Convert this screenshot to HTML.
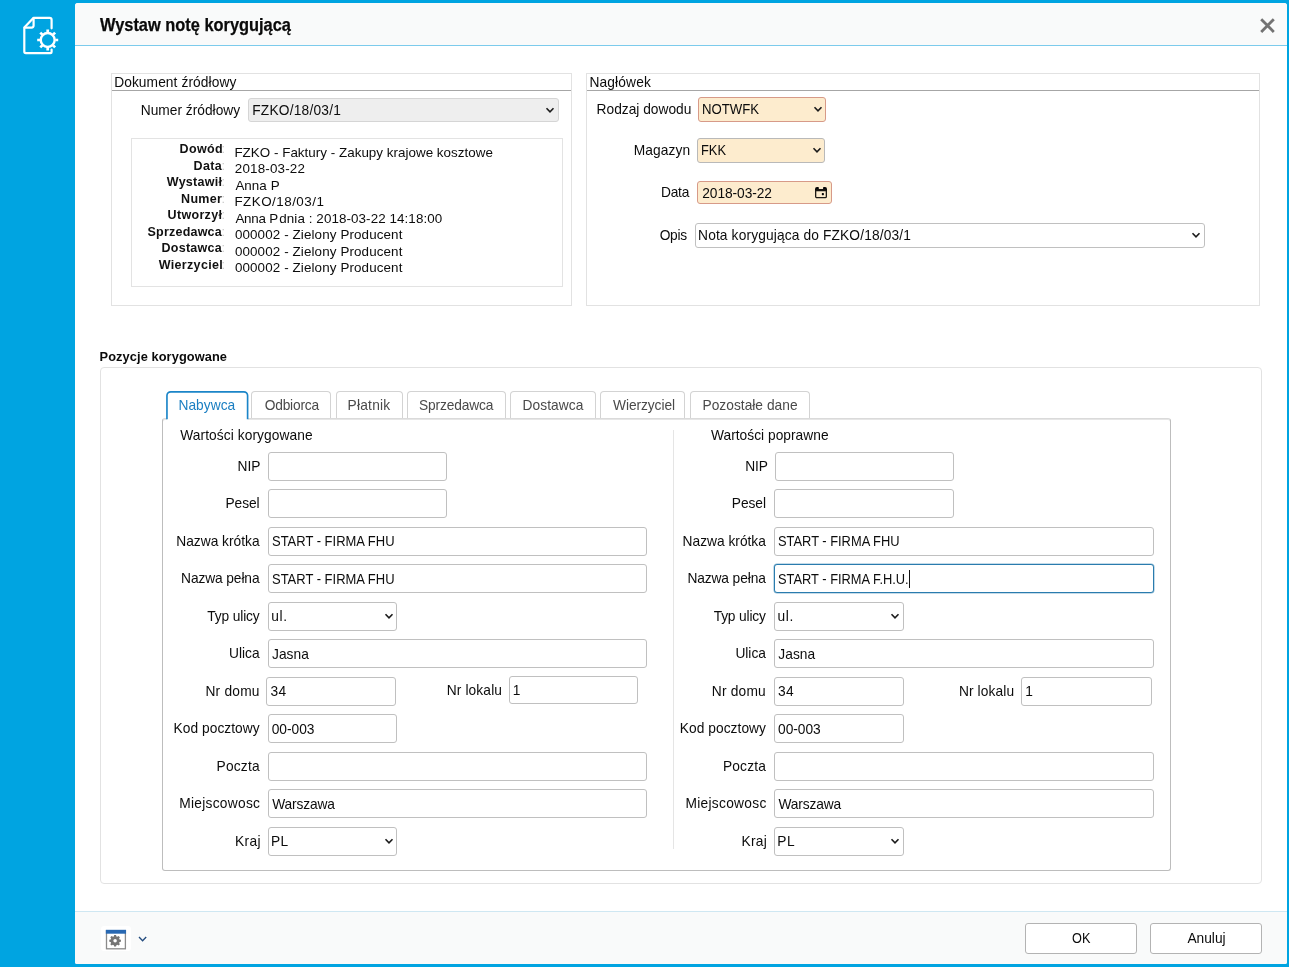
<!DOCTYPE html>
<html>
<head>
<meta charset="utf-8">
<title>Wystaw notę korygującą</title>
<style>
*{box-sizing:border-box;margin:0;padding:0}
html,body{width:1289px;height:967px;overflow:hidden}
body{background:#00a4e1;font-family:"Liberation Sans",sans-serif;font-size:14px;color:#1a1a1a;position:relative}
.abs{position:absolute}
.dlg{position:absolute;left:75px;top:3px;width:1212px;height:961px;background:#fff;border-radius:3px 3px 2px 2px;overflow:hidden}
.tbar{position:absolute;left:0;top:0;width:1212px;height:43px;background:#f9fafa;border-bottom:1px solid #7ccbec}
.fbar{position:absolute;left:0;top:908px;width:1212px;height:53px;background:#f9fafa;border-top:1px solid #cfe7f2}
.btn{position:absolute;border:1px solid #b3b3b3;border-radius:3px;background:#fff;z-index:4}
.fs{position:absolute;border:1px solid #e2e2e2}
.fs .lgl{position:absolute;left:0;right:0;top:16px;height:1px;background:#a6a6a6}
.ibox{position:absolute;border:1px solid #e3e3e3;background:#fff}
.pbox{position:absolute;border:1px solid #e2e2e2;border-radius:4px;background:#fff}
.tpan{position:absolute;border:1px solid #bdbdbd;border-top-color:#dadada;box-shadow:inset 0 1px 0 #e6e6e6;border-radius:3px;background:#fff;z-index:2}
.vdiv{position:absolute;background:#e5e5e5;z-index:3}
.t{position:absolute;white-space:nowrap;line-height:16px;color:#0c0c0c;z-index:5}
.in{position:absolute;border:1px solid #c0c0c0;border-radius:3px;background:#fff;z-index:4}
.in.dis{background:#eeeeee;border-color:#d5d5d5}
.in.or{background:#fdecce;border-color:#d79a88}
.in.or2{background:#fdecce;border-color:#b9b9b9}
.in.foc{border:1px solid #2a7cae;box-shadow:0 0 0 .5px rgba(42,124,174,.55)}
.chv{position:absolute;right:2.3px;top:50%;margin-top:-3px}
.ttl{-webkit-text-stroke:.25px #0a0a0a}
.caret{position:absolute;background:#111;z-index:6}
.tab{position:absolute;border:1px solid #d3d3d3;border-bottom:none;border-radius:4px 4px 0 0;background:#fff;z-index:1}
.tabw{position:absolute;background:#fff;z-index:3}
</style>
</head>
<body>
<!-- sidebar icon -->
<svg class="abs" style="left:20px;top:13px" width="42" height="46" viewBox="0 0 42 46" fill="none" stroke="#fff" stroke-width="2.2" stroke-linejoin="round" stroke-linecap="round">
<path d="M31.6 15.3V6.8a2 2 0 0 0-2-2H13.6L4.3 14.6v24a1.5 1.5 0 0 0 1.5 1.5h24.6a1.2 1.2 0 0 0 1.2-1.2v-2.4"/>
<path d="M13.6 5.2v7.4a2 2 0 0 1-2 2H4.8"/>
<circle cx="27.7" cy="27.0" r="6.95" stroke-width="2.4"/>
<path stroke-width="2.7" stroke-linecap="butt" d="M27.70 19.40L27.70 16.50M33.07 21.63L35.12 19.58M35.30 27.00L38.20 27.00M33.07 32.37L35.12 34.42M27.70 34.60L27.70 37.50M22.33 32.37L20.28 34.42M20.10 27.00L17.20 27.00M22.33 21.63L20.28 19.58"/>
</svg>

<div class="dlg">
  <div class="tbar">
    <svg class="abs" style="left:1182px;top:12px" width="20" height="20" viewBox="0 0 20 20" stroke="#737373" stroke-width="2.8"><path d="M4.2 4.3L16.8 16.9M16.8 4.3L4.2 16.9"/></svg>
  </div>
  <div class="fbar">
    <div class="abs" style="left:26px;top:14.4px;width:30px;height:24.7px;background:#fff;border-radius:3px"></div>
    <svg class="abs" style="left:25px;top:14px" width="50" height="27" viewBox="0 -0.4 50 27">
      <rect x="6.5" y="4.3" width="18.9" height="18.1" fill="#fff" stroke="#8b8b8b" stroke-width="1.3"/>
      <rect x="5.85" y="3.4" width="20.2" height="3.9" fill="#2868b2"/>
      <path d="M13.82 9.98 L14.13 8.58 L16.07 8.58 L16.38 9.98 L17.32 10.37 L18.53 9.60 L19.90 10.97 L19.13 12.18 L19.52 13.12 L20.92 13.43 L20.92 15.37 L19.52 15.68 L19.13 16.62 L19.90 17.83 L18.53 19.20 L17.32 18.43 L16.38 18.82 L16.07 20.22 L14.13 20.22 L13.82 18.82 L12.88 18.43 L11.67 19.20 L10.30 17.83 L11.07 16.62 L10.68 15.68 L9.28 15.37 L9.28 13.43 L10.68 13.12 L11.07 12.18 L10.30 10.97 L11.67 9.60 L12.88 10.37Z" fill="#757575"/>
      <circle cx="15.1" cy="14.4" r="1.75" fill="#fff"/>
      <path d="M39 10.6L42.6 14.3 46.2 10.6" fill="none" stroke="#234b7e" stroke-width="1.35"/>
    </svg>
  </div>
</div>

<!-- CONTENT (absolute page coordinates) -->
<div id="content" class="abs" style="left:0;top:0;width:1289px;height:967px;will-change:transform">
<!--GEN-START-->
<div class="fs" style="left:111.00px;top:73.00px;width:461.00px;height:233.00px;"><div class="lgl"></div></div>
<div class="fs" style="left:586.00px;top:73.00px;width:674.00px;height:233.00px;"><div class="lgl"></div></div>
<div class="t " style="top:75px;line-height:15px;font-size:13.75px;letter-spacing:0.086px;left:114.17px;">Dokument źródłowy</div>
<div class="t " style="top:75px;line-height:15px;font-size:13.75px;letter-spacing:0.161px;left:589.38px;">Nagłówek</div>
<div class="t " style="top:103px;line-height:15px;font-size:13.75px;left:140.78px;">Numer źródłowy</div>
<div class="in sel dis" style="left:248.00px;top:98.00px;width:310.50px;height:23.70px;"><svg class="chv" width="10" height="7" viewBox="0 0 10 7"><path d="M1.5 1.3 L5 4.9 L8.5 1.3" fill="none" stroke="#1c1c1c" stroke-width="1.6"/></svg></div>
<div class="t " style="top:103px;line-height:15px;font-size:13.75px;letter-spacing:0.216px;left:252.18px;">FZKO/18/03/1</div>
<div class="ibox" style="left:131.00px;top:138.00px;width:432.00px;height:149.00px;"></div>
<div class="t " style="top:142px;line-height:14px;font-size:12.5px;letter-spacing:0.344px;font-weight:bold;color:#111;left:179.55px;">Dowód</div>
<div class="t " style="top:145px;line-height:15px;font-size:13.4px;letter-spacing:0.026px;left:234.40px;">FZKO - Faktury - Zakupy krajowe kosztowe</div>
<div class="t " style="top:142px;line-height:14px;font-size:12.5px;color:#c8c8c8;left:221.48px;">:</div>
<div class="t " style="top:159px;line-height:14px;font-size:12.5px;letter-spacing:0.333px;font-weight:bold;color:#111;left:193.55px;">Data</div>
<div class="t " style="top:161px;line-height:15px;font-size:13.4px;letter-spacing:0.181px;left:234.78px;">2018-03-22</div>
<div class="t " style="top:159px;line-height:14px;font-size:12.5px;color:#c8c8c8;left:221.48px;">:</div>
<div class="t " style="top:175px;line-height:14px;font-size:12.5px;letter-spacing:0.268px;font-weight:bold;color:#111;left:166.80px;">Wystawił</div>
<div class="t " style="top:178px;line-height:15px;font-size:13.4px;letter-spacing:0.050px;left:235.40px;">Anna P</div>
<div class="t " style="top:175px;line-height:14px;font-size:12.5px;color:#c8c8c8;left:221.48px;">:</div>
<div class="t " style="top:192px;line-height:14px;font-size:12.5px;letter-spacing:0.312px;font-weight:bold;color:#111;left:181.05px;">Numer</div>
<div class="t " style="top:194px;line-height:15px;font-size:13.4px;letter-spacing:0.489px;left:234.40px;">FZKO/18/03/1</div>
<div class="t " style="top:192px;line-height:14px;font-size:12.5px;color:#c8c8c8;left:221.48px;">:</div>
<div class="t " style="top:208px;line-height:14px;font-size:12.5px;letter-spacing:0.321px;font-weight:bold;color:#111;left:167.55px;">Utworzył</div>
<div class="t " style="top:211px;line-height:15px;font-size:13.4px;letter-spacing:-0.210px;left:235.40px;">Anna P</div>
<div class="t " style="top:211px;line-height:15px;font-size:13.4px;letter-spacing:0.084px;left:279.30px;">dnia : 2018-03-22 14:18:00</div>
<div class="t " style="top:208px;line-height:14px;font-size:12.5px;color:#c8c8c8;left:221.48px;">:</div>
<div class="t " style="top:225px;line-height:14px;font-size:12.5px;letter-spacing:0.208px;font-weight:bold;color:#111;left:147.55px;">Sprzedawca</div>
<div class="t " style="top:227px;line-height:15px;font-size:13.4px;letter-spacing:0.120px;left:234.90px;">000002 - Zielony Producent</div>
<div class="t " style="top:225px;line-height:14px;font-size:12.5px;color:#c8c8c8;left:221.48px;">:</div>
<div class="t " style="top:241px;line-height:14px;font-size:12.5px;letter-spacing:0.250px;font-weight:bold;color:#111;left:161.55px;">Dostawca</div>
<div class="t " style="top:244px;line-height:15px;font-size:13.4px;letter-spacing:0.120px;left:234.90px;">000002 - Zielony Producent</div>
<div class="t " style="top:241px;line-height:14px;font-size:12.5px;color:#c8c8c8;left:221.48px;">:</div>
<div class="t " style="top:258px;line-height:14px;font-size:12.5px;letter-spacing:0.319px;font-weight:bold;color:#111;left:158.80px;">Wierzyciel</div>
<div class="t " style="top:260px;line-height:15px;font-size:13.4px;letter-spacing:0.120px;left:234.90px;">000002 - Zielony Producent</div>
<div class="t " style="top:258px;line-height:14px;font-size:12.5px;color:#c8c8c8;left:221.48px;">:</div>
<div class="t " style="top:102px;line-height:15px;font-size:13.75px;left:596.58px;">Rodzaj dowodu</div>
<div class="in sel or" style="left:698.00px;top:97.40px;width:128.00px;height:24.20px;"><svg class="chv" width="10" height="7" viewBox="0 0 10 7"><path d="M1.5 1.3 L5 4.9 L8.5 1.3" fill="none" stroke="#1c1c1c" stroke-width="1.6"/></svg></div>
<div class="t " style="top:102px;line-height:15px;font-size:13.75px;transform:scaleX(0.9593);transform-origin:0 50%;left:701.72px;">NOTWFK</div>
<div class="t " style="top:143px;line-height:15px;font-size:13.75px;letter-spacing:0.104px;left:633.67px;">Magazyn</div>
<div class="in sel or2" style="left:697.00px;top:138.30px;width:128.00px;height:24.40px;"><svg class="chv" width="10" height="7" viewBox="0 0 10 7"><path d="M1.5 1.3 L5 4.9 L8.5 1.3" fill="none" stroke="#1c1c1c" stroke-width="1.6"/></svg></div>
<div class="t " style="top:143px;line-height:15px;font-size:13.75px;transform:scaleX(0.9366);transform-origin:0 50%;left:700.75px;">FKK</div>
<div class="t " style="top:185px;line-height:15px;font-size:13.75px;letter-spacing:-0.167px;left:660.88px;">Data</div>
<div class="in or" style="left:697.20px;top:181.20px;width:134.60px;height:22.80px;"></div>
<svg class="abs" style="left:815px;top:186.9px;z-index:6" width="12" height="12" viewBox="0 0 12 12"><path d="M0 2.2Q0 .2 2 .1L3.6 .1 3.9 1.9 8 1.9 8.3 .1 10 .1Q12 .2 12 2.2L12 4.2 0 4.2Z" fill="#050505"/><rect x=".65" y="3" width="10.7" height="7.7" rx="1.2" fill="none" stroke="#1d1a14" stroke-width="1.3"/><rect x="6.8" y="6.1" width="2.1" height="2.1" rx=".6" fill="#050505"/></svg>
<div class="t " style="top:186px;line-height:15px;font-size:13.75px;letter-spacing:-0.067px;left:702.27px;">2018-03-22</div>
<div class="t " style="top:228px;line-height:15px;font-size:13.75px;letter-spacing:-0.283px;left:659.67px;">Opis</div>
<div class="in sel" style="left:695.10px;top:223.00px;width:509.70px;height:24.80px;"><svg class="chv" width="10" height="7" viewBox="0 0 10 7"><path d="M1.5 1.3 L5 4.9 L8.5 1.3" fill="none" stroke="#1c1c1c" stroke-width="1.6"/></svg></div>
<div class="t " style="top:228px;line-height:15px;font-size:13.75px;letter-spacing:0.138px;left:698.07px;">Nota korygująca do FZKO/18/03/1</div>
<div class="t " style="top:349px;line-height:15px;font-size:12.8px;letter-spacing:0.091px;font-weight:bold;color:#0a0a0a;left:99.55px;">Pozycje korygowane</div>
<div class="pbox" style="left:100.00px;top:367.00px;width:1162.00px;height:517.00px;"></div>
<div class="tpan" style="left:162.00px;top:418.00px;width:1009.00px;height:452.60px;"></div>
<div class="tabw" style="left:167.00px;top:392.00px;width:80.60px;height:28.00px;"></div>
<svg class="abs" style="left:160px;top:385px;z-index:4" width="100" height="40" viewBox="160 385 100 40"><path d="M166.95 419.3V395.6a3.8 3.8 0 0 1 3.8-3.8H243.8a3.8 3.8 0 0 1 3.8 3.8V419.3" fill="none" stroke="#1b85c8" stroke-width="1.65"/></svg>
<div class="t z4" style="top:398px;line-height:15px;font-size:13.75px;letter-spacing:0.033px;color:#1b7fc2;left:178.48px;">Nabywca</div>
<div class="tab" style="left:251.10px;top:391.00px;width:79.60px;height:27.00px;"></div>
<div class="t z4" style="top:398px;line-height:15px;font-size:13.75px;letter-spacing:-0.179px;color:#4a4a4a;left:264.68px;">Odbiorca</div>
<div class="tab" style="left:336.10px;top:391.00px;width:66.60px;height:27.00px;"></div>
<div class="t z4" style="top:398px;line-height:15px;font-size:13.75px;letter-spacing:0.242px;color:#4a4a4a;left:347.48px;">Płatnik</div>
<div class="tab" style="left:407.10px;top:391.00px;width:98.60px;height:27.00px;"></div>
<div class="t z4" style="top:398px;line-height:15px;font-size:13.75px;letter-spacing:-0.125px;color:#4a4a4a;left:418.98px;">Sprzedawca</div>
<div class="tab" style="left:510.40px;top:391.00px;width:85.60px;height:27.00px;"></div>
<div class="t z4" style="top:398px;line-height:15px;font-size:13.75px;letter-spacing:0.089px;color:#4a4a4a;left:522.47px;">Dostawca</div>
<div class="tab" style="left:600.40px;top:391.00px;width:84.90px;height:27.00px;"></div>
<div class="t z4" style="top:398px;line-height:15px;font-size:13.75px;letter-spacing:-0.064px;color:#4a4a4a;left:613.00px;">Wierzyciel</div>
<div class="tab" style="left:690.40px;top:391.00px;width:119.60px;height:27.00px;"></div>
<div class="t z4" style="top:398px;line-height:15px;font-size:13.75px;letter-spacing:0.021px;color:#4a4a4a;left:702.47px;">Pozostałe dane</div>
<div class="vdiv" style="left:673.00px;top:430.00px;width:1.00px;height:418.50px;"></div>
<div class="t " style="top:428px;line-height:15px;font-size:13.75px;letter-spacing:0.074px;left:180.30px;">Wartości korygowane</div>
<div class="t " style="top:428px;line-height:15px;font-size:13.75px;letter-spacing:0.023px;left:711.00px;">Wartości poprawne</div>
<div class="t " style="top:459px;line-height:15px;font-size:13.75px;letter-spacing:-0.062px;left:237.57px;">NIP</div>
<div class="t " style="top:496px;line-height:15px;font-size:13.75px;letter-spacing:-0.050px;left:225.47px;">Pesel</div>
<div class="t " style="top:534px;line-height:15px;font-size:13.75px;left:176.27px;">Nazwa krótka</div>
<div class="t " style="top:571px;line-height:15px;font-size:13.75px;letter-spacing:-0.100px;left:181.07px;">Nazwa pełna</div>
<div class="t " style="top:609px;line-height:15px;font-size:13.75px;letter-spacing:-0.144px;left:207.35px;">Typ ulicy</div>
<div class="t " style="top:646px;line-height:15px;font-size:13.75px;letter-spacing:-0.006px;left:229.10px;">Ulica</div>
<div class="t " style="top:684px;line-height:15px;font-size:13.75px;letter-spacing:0.208px;left:205.47px;">Nr domu</div>
<div class="t " style="top:721px;line-height:15px;font-size:13.75px;letter-spacing:0.055px;left:173.47px;">Kod pocztowy</div>
<div class="t " style="top:759px;line-height:15px;font-size:13.75px;letter-spacing:0.200px;left:216.57px;">Poczta</div>
<div class="t " style="top:796px;line-height:15px;font-size:13.75px;letter-spacing:0.290px;left:179.17px;">Miejscowosc</div>
<div class="t " style="top:834px;line-height:15px;font-size:13.75px;letter-spacing:0.333px;left:235.07px;">Kraj</div>
<div class="in" style="left:268.00px;top:451.90px;width:179.00px;height:29.00px;"></div>
<div class="in" style="left:268.00px;top:489.40px;width:179.30px;height:29.00px;"></div>
<div class="in" style="left:268.00px;top:526.90px;width:379.30px;height:29.00px;"></div>
<div class="t " style="top:534px;line-height:15px;font-size:13.75px;transform:scaleX(0.9435);transform-origin:0 50%;left:271.61px;">START - FIRMA FHU</div>
<div class="in" style="left:268.00px;top:564.40px;width:379.30px;height:29.00px;"></div>
<div class="t " style="top:572px;line-height:15px;font-size:13.75px;transform:scaleX(0.9435);transform-origin:0 50%;left:271.61px;">START - FIRMA FHU</div>
<div class="in sel" style="left:268.00px;top:601.90px;width:129.30px;height:29.00px;"><svg class="chv" width="10" height="7" viewBox="0 0 10 7"><path d="M1.5 1.3 L5 4.9 L8.5 1.3" fill="none" stroke="#1c1c1c" stroke-width="1.6"/></svg></div>
<div class="t " style="top:609px;line-height:15px;font-size:13.75px;letter-spacing:0.600px;left:271.32px;">ul.</div>
<div class="in" style="left:268.00px;top:639.40px;width:379.30px;height:29.00px;"></div>
<div class="t " style="top:647px;line-height:15px;font-size:13.75px;letter-spacing:0.019px;left:272.07px;">Jasna</div>
<div class="in" style="left:266.00px;top:676.60px;width:129.60px;height:29.00px;"></div>
<div class="t " style="top:684px;line-height:15px;font-size:13.75px;letter-spacing:0.325px;left:270.60px;">34</div>
<div class="in" style="left:268.00px;top:714.40px;width:129.30px;height:29.00px;"></div>
<div class="t " style="top:722px;line-height:15px;font-size:13.75px;letter-spacing:-0.010px;left:271.70px;">00-003</div>
<div class="in" style="left:268.00px;top:751.90px;width:379.30px;height:29.00px;"></div>
<div class="in" style="left:268.00px;top:789.40px;width:379.30px;height:29.00px;"></div>
<div class="t " style="top:797px;line-height:15px;font-size:13.75px;letter-spacing:-0.150px;left:272.20px;">Warszawa</div>
<div class="in sel" style="left:268.00px;top:826.90px;width:129.30px;height:29.00px;"><svg class="chv" width="10" height="7" viewBox="0 0 10 7"><path d="M1.5 1.3 L5 4.9 L8.5 1.3" fill="none" stroke="#1c1c1c" stroke-width="1.6"/></svg></div>
<div class="t " style="top:834px;line-height:15px;font-size:13.75px;letter-spacing:0.350px;left:271.07px;">PL</div>
<div class="t " style="top:459px;line-height:15px;font-size:13.75px;letter-spacing:-0.062px;left:745.17px;">NIP</div>
<div class="t " style="top:496px;line-height:15px;font-size:13.75px;letter-spacing:-0.050px;left:731.78px;">Pesel</div>
<div class="t " style="top:534px;line-height:15px;font-size:13.75px;left:682.58px;">Nazwa krótka</div>
<div class="t " style="top:571px;line-height:15px;font-size:13.75px;letter-spacing:-0.100px;left:687.38px;">Nazwa pełna</div>
<div class="t " style="top:609px;line-height:15px;font-size:13.75px;letter-spacing:-0.144px;left:713.65px;">Typ ulicy</div>
<div class="t " style="top:646px;line-height:15px;font-size:13.75px;letter-spacing:-0.006px;left:735.40px;">Ulica</div>
<div class="t " style="top:684px;line-height:15px;font-size:13.75px;letter-spacing:0.208px;left:711.77px;">Nr domu</div>
<div class="t " style="top:721px;line-height:15px;font-size:13.75px;letter-spacing:0.055px;left:679.77px;">Kod pocztowy</div>
<div class="t " style="top:759px;line-height:15px;font-size:13.75px;letter-spacing:0.200px;left:722.88px;">Poczta</div>
<div class="t " style="top:796px;line-height:15px;font-size:13.75px;letter-spacing:0.290px;left:685.48px;">Miejscowosc</div>
<div class="t " style="top:834px;line-height:15px;font-size:13.75px;letter-spacing:0.333px;left:741.38px;">Kraj</div>
<div class="in" style="left:775.10px;top:451.90px;width:179.20px;height:29.00px;"></div>
<div class="in" style="left:774.30px;top:489.40px;width:179.30px;height:29.00px;"></div>
<div class="in" style="left:774.30px;top:526.90px;width:379.30px;height:29.00px;"></div>
<div class="t " style="top:534px;line-height:15px;font-size:13.75px;transform:scaleX(0.9357);transform-origin:0 50%;left:777.92px;">START - FIRMA FHU</div>
<div class="in foc" style="left:774.30px;top:564.40px;width:379.30px;height:29.00px;"></div>
<div class="t " style="top:572px;line-height:15px;font-size:13.75px;transform:scaleX(0.9348);transform-origin:0 50%;left:777.92px;">START - FIRMA F.H.U.</div>
<div class="caret" style="left:909.30px;top:569.90px;width:1.00px;height:18.00px;"></div>
<div class="in sel" style="left:774.30px;top:601.90px;width:129.30px;height:29.00px;"><svg class="chv" width="10" height="7" viewBox="0 0 10 7"><path d="M1.5 1.3 L5 4.9 L8.5 1.3" fill="none" stroke="#1c1c1c" stroke-width="1.6"/></svg></div>
<div class="t " style="top:609px;line-height:15px;font-size:13.75px;letter-spacing:0.600px;left:777.62px;">ul.</div>
<div class="in" style="left:774.30px;top:639.40px;width:379.30px;height:29.00px;"></div>
<div class="t " style="top:647px;line-height:15px;font-size:13.75px;letter-spacing:0.019px;left:778.37px;">Jasna</div>
<div class="in" style="left:774.30px;top:676.60px;width:129.60px;height:29.00px;"></div>
<div class="t " style="top:684px;line-height:15px;font-size:13.75px;letter-spacing:0.325px;left:778.00px;">34</div>
<div class="in" style="left:774.30px;top:714.40px;width:129.30px;height:29.00px;"></div>
<div class="t " style="top:722px;line-height:15px;font-size:13.75px;letter-spacing:-0.010px;left:778.00px;">00-003</div>
<div class="in" style="left:774.30px;top:751.90px;width:379.30px;height:29.00px;"></div>
<div class="in" style="left:774.30px;top:789.40px;width:379.30px;height:29.00px;"></div>
<div class="t " style="top:797px;line-height:15px;font-size:13.75px;letter-spacing:-0.150px;left:778.50px;">Warszawa</div>
<div class="in sel" style="left:774.30px;top:826.90px;width:129.30px;height:29.00px;"><svg class="chv" width="10" height="7" viewBox="0 0 10 7"><path d="M1.5 1.3 L5 4.9 L8.5 1.3" fill="none" stroke="#1c1c1c" stroke-width="1.6"/></svg></div>
<div class="t " style="top:834px;line-height:15px;font-size:13.75px;letter-spacing:0.350px;left:777.37px;">PL</div>
<div class="t " style="top:683px;line-height:15px;font-size:13.75px;letter-spacing:0.131px;left:446.68px;">Nr lokalu</div>
<div class="in" style="left:509.00px;top:676.00px;width:129.40px;height:28.20px;"></div>
<div class="t " style="top:683px;line-height:15px;font-size:13.75px;left:512.80px;">1</div>
<div class="t " style="top:684px;line-height:15px;font-size:13.75px;letter-spacing:0.131px;left:958.88px;">Nr lokalu</div>
<div class="in" style="left:1021.40px;top:677.30px;width:130.40px;height:28.30px;"></div>
<div class="t " style="top:684px;line-height:15px;font-size:13.75px;left:1025.30px;">1</div>
<div class="t ttl" style="top:15px;line-height:20px;font-size:17.8px;transform:scaleX(0.9214);transform-origin:0 50%;font-weight:bold;color:#0a0a0a;left:100.30px;">Wystaw notę korygującą</div>
<div class="btn" style="left:1025.00px;top:923.00px;width:112.00px;height:31.00px;"></div>
<div class="btn" style="left:1150.00px;top:923.00px;width:112.00px;height:31.00px;"></div>
<div class="t " style="top:931px;line-height:15px;font-size:13.75px;transform:scaleX(0.9247);transform-origin:0 50%;color:#0a0a0a;left:1071.72px;">OK</div>
<div class="t " style="top:931px;line-height:15px;font-size:13.75px;color:#0a0a0a;left:1187.40px;">Anuluj</div>
<!--GEN-END-->
</div>
</body>
</html>
